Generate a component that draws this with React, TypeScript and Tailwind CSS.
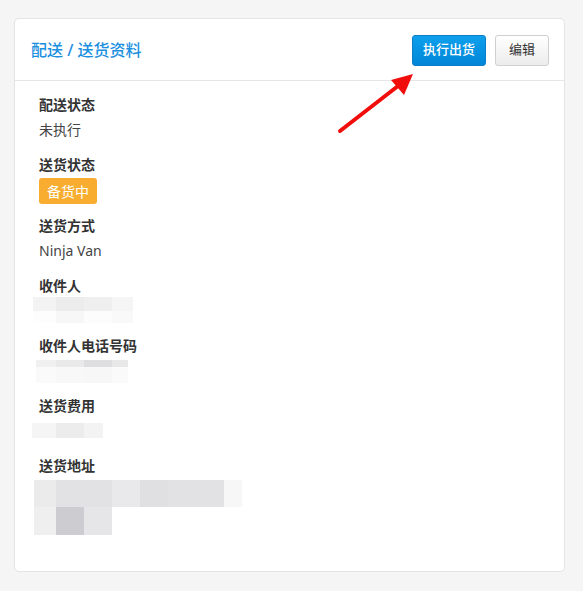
type Cell = { w: number; c: string };
type Row = { h: number; cells: Cell[] };

const receiver: Row[] = [
  { h: 14, cells: [{ w: 23, c: '#f3f3f3' }, { w: 28, c: '#ececec' }, { w: 28, c: '#efefef' }, { w: 21, c: '#f5f5f5' }] },
  { h: 12, cells: [{ w: 23, c: '#fdfdfd' }, { w: 28, c: '#f7f7f7' }, { w: 28, c: '#fcfcfc' }, { w: 21, c: '#f9f9f9' }] },
];
const phone: Row[] = [
  { h: 7, cells: [{ w: 20, c: '#f0f0f0' }, { w: 28, c: '#e9e9ea' }, { w: 28, c: '#dedee0' }, { w: 16, c: '#e8e8e8' }] },
  { h: 16, cells: [{ w: 20, c: '#fafafa' }, { w: 28, c: '#f8f8f8' }, { w: 28, c: '#f7f7f7' }, { w: 16, c: '#fafafa' }] },
];
const fee: Row[] = [
  { h: 15, cells: [{ w: 24, c: '#f5f5f5' }, { w: 28, c: '#ececec' }, { w: 19, c: '#f3f3f3' }] },
];
const address: Row[] = [
  { h: 27, cells: [{ w: 22, c: '#ebebeb' }, { w: 28, c: '#e2e2e4' }, { w: 28, c: '#e2e2e4' }, { w: 28, c: '#e9e9eb' }, { w: 28, c: '#e0e0e2' }, { w: 56, c: '#e2e2e4' }, { w: 18, c: '#f7f7f7' }] },
  { h: 28, cells: [{ w: 22, c: '#efefef' }, { w: 28, c: '#cdcdd1' }, { w: 28, c: '#e6e6e8' }] },
];

function Mosaic({ rows, offset, top }: { rows: Row[]; offset: number; top: number }) {
  return (
    <div className="flex flex-col" style={{ marginLeft: offset, marginTop: top }}>
      {rows.map((r, i) => (
        <div key={i} className="flex">
          {r.cells.map((cell, j) => (
            <div key={j} style={{ width: cell.w, height: r.h, background: cell.c }} />
          ))}
        </div>
      ))}
    </div>
  );
}

function Label({ children }: { children: React.ReactNode }) {
  return <div className="text-[14px] leading-[20px] font-bold text-[#333]">{children}</div>;
}

export default function App() {
  return (
    <div
      className="relative min-h-screen bg-[#f5f5f5] pt-[18px] pl-[14px] pr-[18px] pb-[19px]"
      style={{ fontFamily: '"Noto Sans", "Noto Sans CJK SC", sans-serif' }}
    >
      <div className="w-[551px] h-[554px] bg-white border border-[#e4e4e4] rounded-[5px]">
        {/* Header */}
        <div className="h-[62px] flex items-center justify-between pl-[16px] pr-[15px] border-b border-[#e6e6e6]">
          <h2 className="text-[16px] text-[#1b8fe0] font-medium">配送 / 送货资料</h2>
          <div className="flex items-center gap-[9px] mt-[1px]">
            <button className="w-[74px] h-[31px] rounded-[3px] border border-[#0c7dc8] bg-gradient-to-b from-[#0ea0ec] to-[#0186d8] text-white text-[13px] font-medium">
              执行出货
            </button>
            <button className="w-[54px] h-[31px] rounded-[3px] border border-[#cfcfcf] bg-gradient-to-b from-white to-[#ececec] text-[#333] text-[13px]">
              编辑
            </button>
          </div>
        </div>

        {/* Body */}
        <div className="pl-[24px] pt-[14px] flex flex-col">
          <div className="h-[60px]">
            <Label>配送状态</Label>
            <div className="mt-[5px] text-[14px] leading-[20px] text-[#444]">未执行</div>
          </div>
          <div className="h-[61px]">
            <Label>送货状态</Label>
            <span className="inline-flex items-center mt-[3px] h-[26px] px-[8px] rounded-[3px] bg-[#f8ad30] text-white text-[14px]">
              备货中
            </span>
          </div>
          <div className="h-[60px]">
            <Label>送货方式</Label>
            <div className="mt-[5px] text-[14px] leading-[20px] text-[#444]">Ninja Van</div>
          </div>
          <div className="h-[60px]">
            <Label>收件人</Label>
            <Mosaic rows={receiver} offset={-6} top={1} />
          </div>
          <div className="h-[60px]">
            <Label>收件人电话号码</Label>
            <Mosaic rows={phone} offset={-3} top={4} />
          </div>
          <div className="h-[60px]">
            <Label>送货费用</Label>
            <Mosaic rows={fee} offset={-7} top={7} />
          </div>
          <div>
            <Label>送货地址</Label>
            <Mosaic rows={address} offset={-5} top={4} />
          </div>
        </div>
      </div>

      {/* annotation arrow */}
      <svg className="absolute left-0 top-0 pointer-events-none" width="583" height="591">
        <line x1="340" y1="131" x2="398" y2="86" stroke="#f20d0d" strokeWidth="4" strokeLinecap="round" />
        <polygon points="413,74 391,80 404,95" fill="#f20d0d" />
      </svg>
    </div>
  );
}
